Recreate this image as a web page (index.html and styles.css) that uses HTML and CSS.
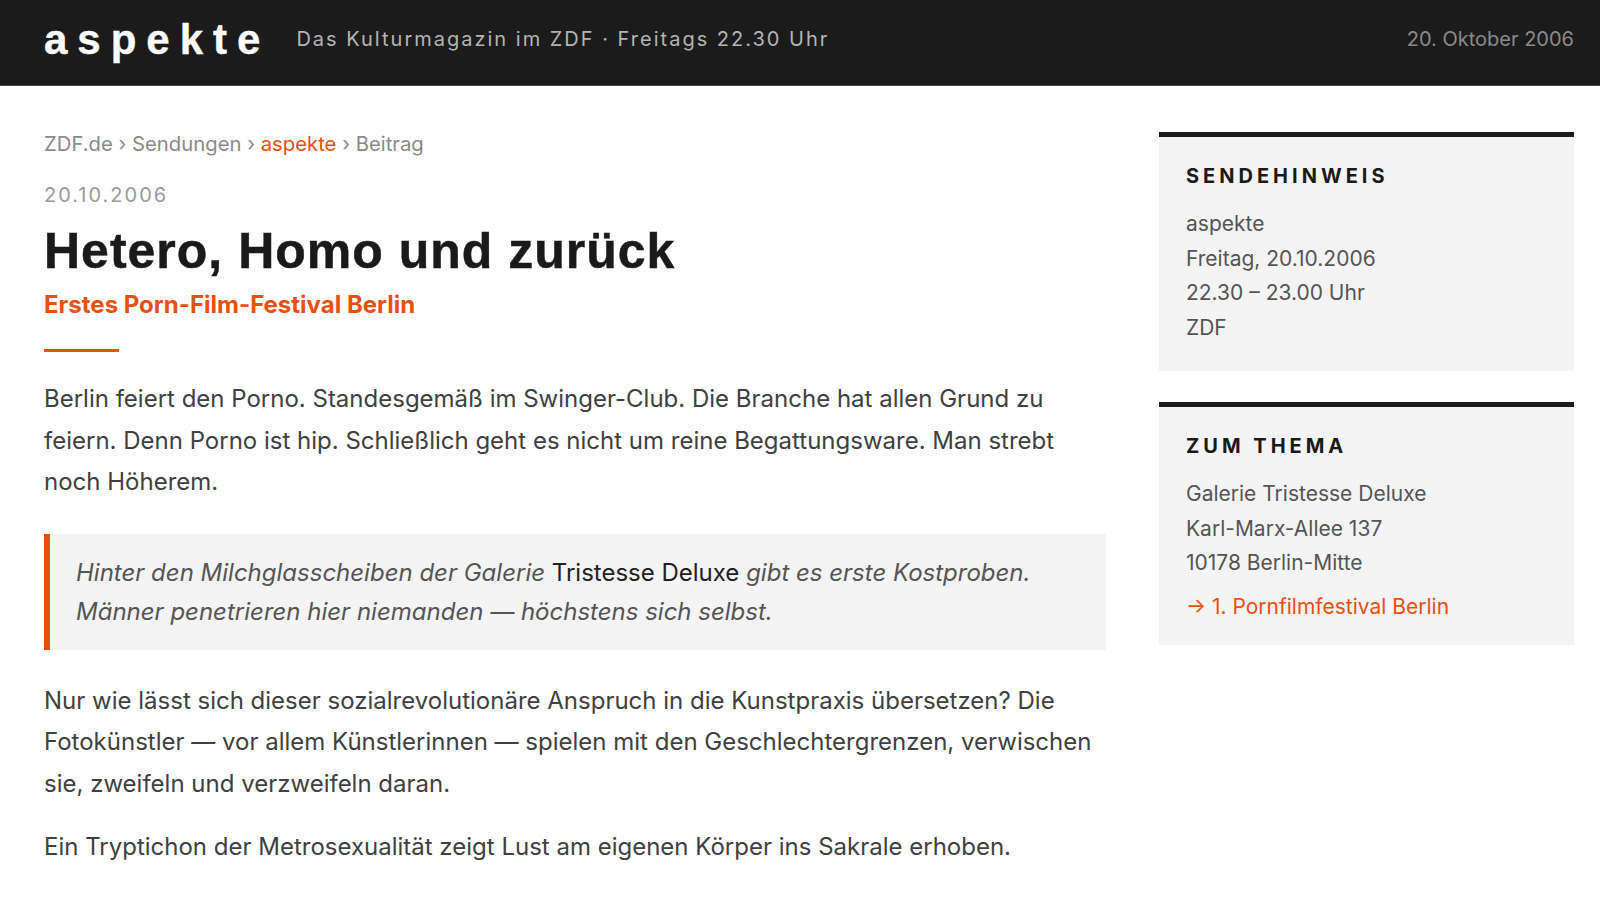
FILE: index.html
```html
<!DOCTYPE html>
<html lang="de">
<head>
<meta charset="utf-8">
<title>aspekte – Hetero, Homo und zurück</title>
<link rel="stylesheet" href="styles.css">
</head>
<body>
<header class="masthead">
  <div class="brand">aspekte</div>
  <div class="tagline">Das Kulturmagazin im ZDF · Freitags 22.30 Uhr</div>
  <div class="issue-date">20. Oktober 2006</div>
</header>
<div class="page">
  <main class="article">
    <nav class="crumbs">ZDF.de <span class="sep">›</span> Sendungen <span class="sep">›</span> <a class="crumb-active">aspekte</a> <span class="sep">›</span> Beitrag</nav>
    <div class="dateline">20.10.2006</div>
    <h1 class="headline">Hetero, Homo und zurück</h1>
    <h2 class="subline">Erstes Porn-Film-Festival Berlin</h2>
    <div class="accent"></div>
    <p class="para">Berlin feiert den Porno. Standesgemäß im Swinger-Club. Die Branche hat allen Grund zu feiern. Denn Porno ist hip. Schließlich geht es nicht um reine Begattungsware. Man strebt noch Höherem.</p>
    <blockquote class="quote">Hinter den Milchglasscheiben der Galerie <span class="upright">Tristesse Deluxe</span> gibt es erste Kostproben. Männer penetrieren hier niemanden — höchstens sich selbst.</blockquote>
    <p class="para">Nur wie lässt sich dieser sozialrevolutionäre Anspruch in die Kunstpraxis übersetzen? Die Fotokünstler — vor allem Künstlerinnen — spielen mit den Geschlechtergrenzen, verwischen sie, zweifeln und verzweifeln daran.</p>
    <p class="para">Ein Tryptichon der Metrosexualität zeigt Lust am eigenen Körper ins Sakrale erhoben.</p>
  </main>
  <aside class="sidebar">
    <section class="box">
      <h3 class="box-title">Sendehinweis</h3>
      <div class="box-line">aspekte</div>
      <div class="box-line">Freitag, 20.10.2006</div>
      <div class="box-line">22.30 – 23.00 Uhr</div>
      <div class="box-line">ZDF</div>
    </section>
    <section class="box">
      <h3 class="box-title">Zum Thema</h3>
      <div class="box-line">Galerie Tristesse Deluxe</div>
      <div class="box-line">Karl-Marx-Allee 137</div>
      <div class="box-line">10178 Berlin-Mitte</div>
      <a class="box-link">→ 1. Pornfilmfestival Berlin</a>
    </section>
  </aside>
</div>
</body>
</html>
```
FILE: styles.css
```css
* { box-sizing: border-box; }
html, body { margin: 0; padding: 0; background: #fff; }
body {
  font-family: Inter, "Noto Sans", "Liberation Sans", sans-serif;
  color: #404040;
  width: 1600px;
}

.masthead {
  height: 86px;
  background: #1b1b1b;
  border-bottom: 1px solid #474747;
  display: flex;
  align-items: center;
  padding: 0 26px 0 44px;
}
.brand {
  font-family: "Liberation Sans", Arial, sans-serif;
  font-weight: 700;
  font-size: 42px;
  letter-spacing: 10px;
  color: #fff;
  line-height: 1;
  margin-top: -6px;
  -webkit-text-stroke: 0.4px #fff;
}
.tagline {
  margin-left: 26px;
  font-size: 20px;
  letter-spacing: 2px;
  color: #b4b4b4;
  margin-top: -8px;
}
.issue-date {
  margin-left: auto;
  font-size: 20px;
  color: #8a8a8a;
  margin-top: -8px;
}

.page {
  display: grid;
  grid-template-columns: 1fr 415px;
  column-gap: 53px;
  padding: 46px 26px 0 44px;
  align-items: start;
}

.crumbs {
  font-size: 20.3px;
  line-height: 24px;
  color: #8a8a8a;
}
.crumb-active { color: #e8500f; }
.dateline {
  margin-top: 26px;
  font-size: 20px;
  line-height: 26px;
  letter-spacing: 2px;
  color: #9a9a9a;
}
.headline {
  margin: 14px 0 0;
  font-family: "Liberation Sans", Arial, sans-serif;
  font-weight: 700;
  font-size: 50px;
  line-height: 58px;
  letter-spacing: 1px;
  color: #1a1a1a;
  -webkit-text-stroke: 0.5px #1a1a1a;
}
.subline {
  margin: 9px 0 0;
  font-size: 24px;
  line-height: 31px;
  font-weight: 700;
  color: #e8500f;
}
.accent {
  margin-top: 29px;
  width: 75px;
  height: 3px;
  background: #e8500f;
}
.para {
  margin: 22px 0 0;
  font-size: 24px;
  line-height: 41.5px;
  color: #404040;
}
.accent + .para { margin-top: 26px; }
.quote {
  margin: 31px 0 0;
  background: #f4f4f4;
  border-left: 6px solid #e8500f;
  padding: 19px 28px 19px 26px;
  font-size: 24px;
  line-height: 39px;
  font-style: italic;
  color: #555;
}
.upright { font-style: normal; color: #222; }
.quote + .para { margin-top: 30px; }

.sidebar {
  display: flex;
  flex-direction: column;
  gap: 31px;
}
.box {
  background: #f4f4f4;
  border-top: 5px solid #1b1b1b;
  padding: 27px 27px 26px;
}
.box-title {
  margin: 0 0 19px;
  font-size: 20px;
  line-height: 24px;
  font-weight: 700;
  letter-spacing: 4px;
  text-transform: uppercase;
  color: #1a1a1a;
}
.box-line {
  font-size: 21px;
  line-height: 34.5px;
  color: #555;
}
.box-link {
  display: block;
  margin-top: 14px;
  font-size: 21px;
  line-height: 24px;
  color: #e8500f;
}
```
